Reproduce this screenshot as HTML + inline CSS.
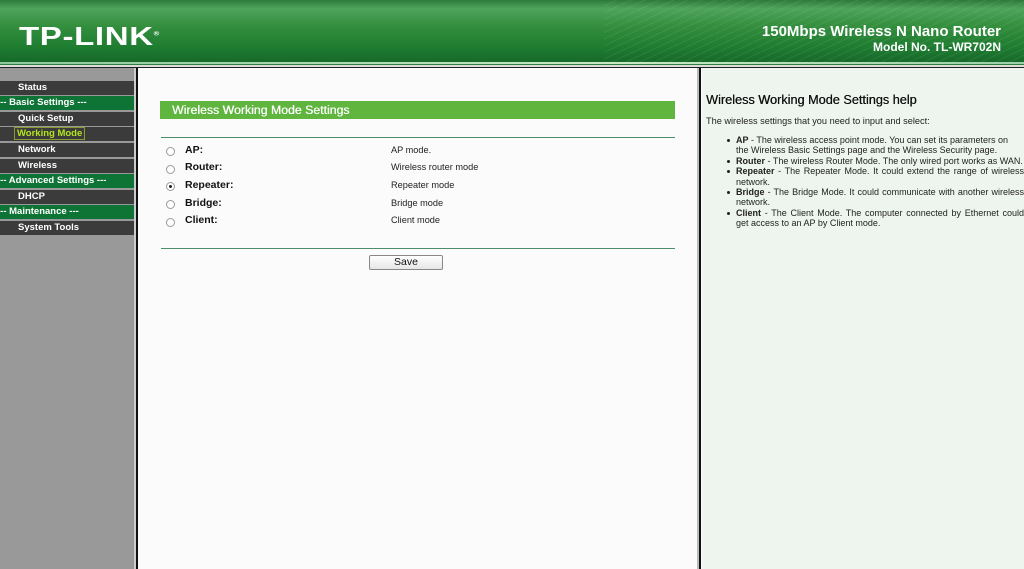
<!DOCTYPE html>
<html><head><meta charset="utf-8"><style>
*{margin:0;padding:0;box-sizing:border-box}
body{width:1024px;height:569px;overflow:hidden;font-family:"Liberation Sans",Arial,sans-serif;background:#fbfbfb;position:relative}
#hd{position:absolute;left:0;top:0;width:1024px;height:62px;background:linear-gradient(180deg,#2d7a3a 0%,#4fa35c 14%,#35903f 40%,#1f7d31 75%,#17692a 100%)}
#hd:after{content:"";position:absolute;right:0;top:0;width:420px;height:62px;background:repeating-linear-gradient(155deg,rgba(255,255,255,0) 0 5px,rgba(255,255,255,.07) 5px 6px);}
.logo{position:absolute;left:19px;top:21px;color:#fff;font-weight:bold;font-size:26px;letter-spacing:0.5px;transform:scaleX(1.27);transform-origin:left}
.t1{position:absolute;right:23px;top:23px;color:#fff;font-weight:bold;font-size:15px;z-index:2}
.t2{position:absolute;right:23px;top:40px;color:#fff;font-weight:bold;font-size:12px;z-index:2}
#l1{position:absolute;left:0;top:62px;width:1024px;height:2px;background:linear-gradient(90deg,#8cc79a,#c8e8c0 60%,#9ccfa8)}
#l2{position:absolute;left:0;top:64px;width:1024px;height:1px;background:#2d7f3c}
#l3{position:absolute;left:0;top:65px;width:1024px;height:2px;background:#ddd}
#l4{position:absolute;left:0;top:67px;width:1024px;height:1px;background:#222}
#sb{position:absolute;left:0;top:68px;width:134px;height:501px;background:#999}
.strip{position:absolute;left:134px;top:68px;width:3px;height:501px;background:#ccc}
.bl{position:absolute;top:68px;width:2px;height:501px;background:#111}
.m{position:absolute;left:0;width:134px;height:14px;color:#fff;font-weight:bold;font-size:9.5px;line-height:14px;background:#3b3b3b;padding-left:18px;white-space:nowrap;overflow:hidden}
.g{background:#0e7436;padding-left:0;text-indent:-3px}
.sel{color:#b5e61d}
.sel span{border:1px solid #8a9a30;padding:0 2px;margin-left:-4px}
#rp{position:absolute;left:702px;top:68px;width:322px;height:501px;background:#eef5ee}
.bar{position:absolute;left:160px;top:101px;width:515px;height:18px;background:#5fb53e;color:#fff;font-size:12.3px;line-height:18px;padding-left:12px;text-shadow:0.3px 0 0 #fff}
.hr{position:absolute;left:161px;width:514px;height:1px;background:#4d8c6c}
.rad{position:absolute;left:166px;width:9px;height:9px;border:1px solid #999;border-radius:50%;background:#fff}
.rad.on:after{content:"";position:absolute;left:2px;top:2px;width:3px;height:3px;border-radius:50%;background:#222}
.lb{position:absolute;left:185px;font-weight:bold;font-size:10.5px;color:#111}
.ds{position:absolute;left:391px;font-size:9.2px;color:#222}
.btn{position:absolute;left:369px;top:255px;width:74px;height:15px;border:1px solid #888;border-radius:2px;background:linear-gradient(#fff,#e6e6e6);font-size:10.5px;text-align:center;line-height:13px;color:#111}
.h{position:absolute;left:706px;top:93px;font-size:12.7px;color:#111;text-shadow:0.3px 0 0 #111}
.p{position:absolute;left:706px;top:116px;font-size:9.2px;color:#222}
ul{position:absolute;left:736px;top:135px;width:288px;font-size:9px;color:#222;line-height:10.4px;list-style:none;text-align:justify}
ul li{position:relative}
ul li:before{content:"";position:absolute;left:-9px;top:4px;width:3px;height:3px;border-radius:50%;background:#222}
</style></head><body>
<div id="hd"><div class="logo">TP-LINK<sup style="font-size:6px">®</sup></div></div>
<div class="t1">150Mbps Wireless N Nano Router</div>
<div class="t2">Model No. TL-WR702N</div>
<div id="l1"></div><div id="l2"></div><div id="l3"></div><div id="l4"></div>
<div id="sb"></div>
<div class="m" style="top:81px">Status</div>
<div class="m g" style="top:96px">--- Basic Settings ---</div>
<div class="m" style="top:112px">Quick Setup</div>
<div class="m sel" style="top:127px"><span>Working Mode</span></div>
<div class="m" style="top:143px">Network</div>
<div class="m" style="top:159px">Wireless</div>
<div class="m g" style="top:174px">--- Advanced Settings ---</div>
<div class="m" style="top:190px">DHCP</div>
<div class="m g" style="top:205px">--- Maintenance ---</div>
<div class="m" style="top:221px">System Tools</div>
<div class="strip"></div>
<div class="bl" style="left:136px"></div>
<div class="strip" style="left:697px;width:2px;background:#bbb"></div>
<div class="bl" style="left:699px"></div>
<div id="rp"></div>
<div class="bar">Wireless Working Mode Settings</div>
<div class="hr" style="top:137px"></div>
<div class="rad" style="top:147px"></div><div class="lb" style="top:144px">AP:</div><div class="ds" style="top:145px">AP mode.</div>
<div class="rad" style="top:165px"></div><div class="lb" style="top:161px">Router:</div><div class="ds" style="top:162px">Wireless router mode</div>
<div class="rad on" style="top:182px"></div><div class="lb" style="top:179px">Repeater:</div><div class="ds" style="top:180px">Repeater mode</div>
<div class="rad" style="top:200px"></div><div class="lb" style="top:197px">Bridge:</div><div class="ds" style="top:198px">Bridge mode</div>
<div class="rad" style="top:218px"></div><div class="lb" style="top:214px">Client:</div><div class="ds" style="top:215px">Client mode</div>
<div class="hr" style="top:248px"></div>
<div class="btn">Save</div>
<div class="h">Wireless Working Mode Settings help</div>
<div class="p">The wireless settings that you need to input and select:</div>
<ul>
<li><b>AP</b> - The wireless access point mode. You can set its parameters on<br>the Wireless Basic Settings page and the Wireless Security page.</li>
<li><b>Router</b> - The wireless Router Mode. The only wired port works as WAN.</li>
<li><b>Repeater</b> - The Repeater Mode. It could extend the range of wireless network.</li>
<li><b>Bridge</b> - The Bridge Mode. It could communicate with another wireless network.</li>
<li><b>Client</b> - The Client Mode. The computer connected by Ethernet could get access to an AP by Client mode.</li>
</ul>
</body></html>
